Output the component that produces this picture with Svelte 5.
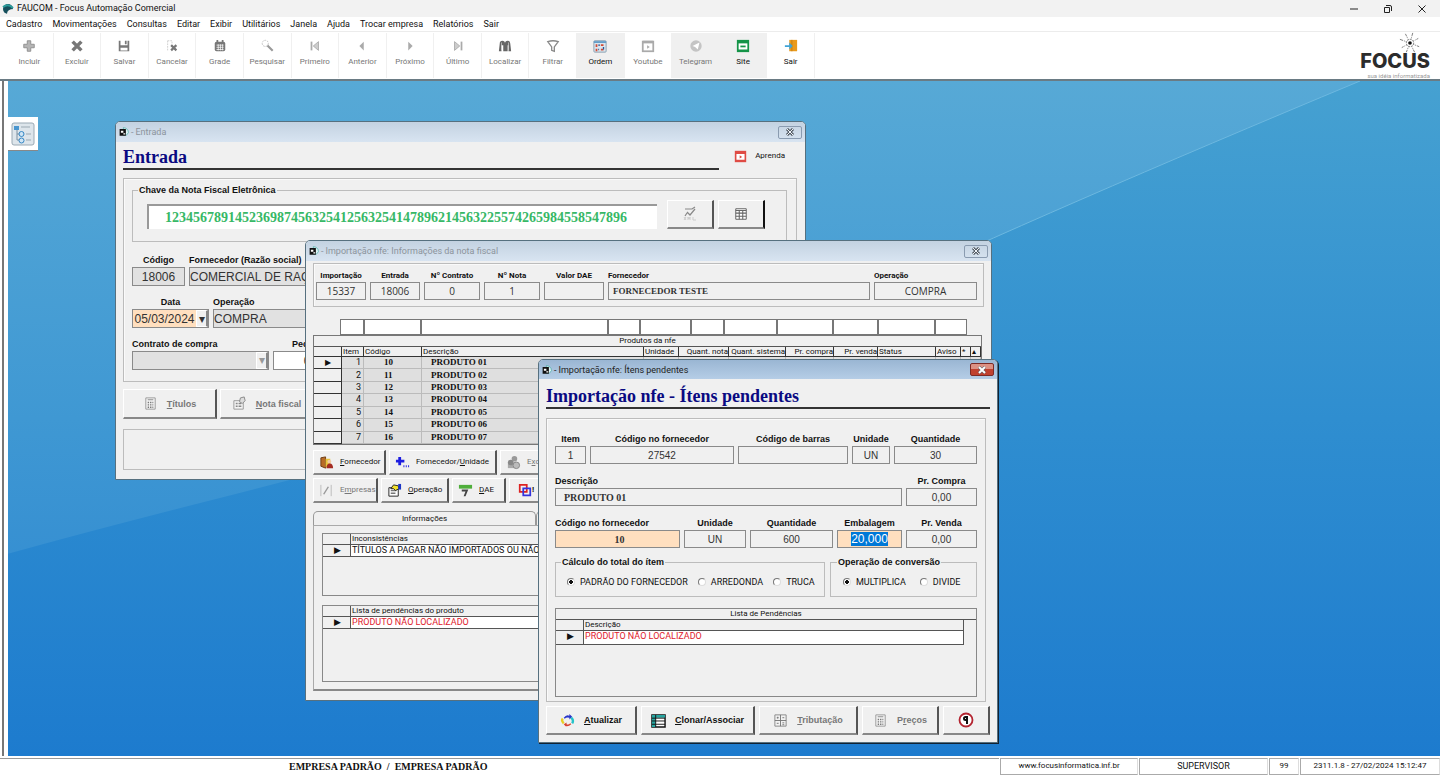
<script>
	const icons = {
		plus: '<path d="M6 2h4v4h4v4h-4v4H6v-4H2V6h4z" fill="#b5b5b5" stroke="#8c8c8c"/>',
		cross: '<path d="M3 3l10 10M13 3L3 13" stroke="#777" stroke-width="4"/>',
		save: '<path d="M2 2h12v12H2z" fill="#777"/><path d="M4 1h8v6H4zM4 10h8v3H4z" fill="#fff"/><path d="M9 2h2v4H9z" fill="#777"/>',
		cancel: '<path d="M3 2h5v3M3 2v12" fill="none" stroke="#ccc" stroke-dasharray="2 1"/><path d="M7 7l6 6M13 7l-6 6" stroke="#777" stroke-width="2.5"/>',
		grid: '<rect x="2" y="3" width="12" height="11" rx="2" fill="#777"/><path d="M4 7h8M4 9.500h8M4 12h8M6 6v7M8.500 6v7M11 6v7" stroke="#fff" stroke-width=".8"/><path d="M5 1v3M11 1v3" stroke="#777" stroke-width="2"/>',
		search: '<circle cx="6" cy="5" r="3.500" fill="none" stroke="#bbb" stroke-dasharray="2 1"/><path d="M8.500 7.500l6 6" stroke="#999" stroke-width="2.500"/>',
		first: '<path d="M4 3v10" stroke="#aaa" stroke-width="2"/><path d="M12 3v10L6 8z" fill="#ccc" stroke="#aaa"/>',
		prev: '<path d="M10 3v10L5 8z" fill="#aaa"/>',
		next: '<path d="M6 3v10l5-5z" fill="#aaa"/>',
		last: '<path d="M12 3v10" stroke="#aaa" stroke-width="2"/><path d="M4 3v10l6-5z" fill="#ccc" stroke="#aaa"/>',
		find: '<path d="M1 14l1-9q0-3 3-3t3 3v9H6V7H4v7zM8 14V5q0-3 3-3t3 3l1 9h-3V7h-1v7z" fill="#666"/><path d="M4 4v9M12 4v9" stroke="#ddd" stroke-width=".7"/>',
		filter: '<path d="M2 3q6-2 12 0L9.500 9v5L6.500 13V9z" fill="#fff" stroke="#888" stroke-width="1.500"/>',
		order: '<rect x="1" y="2" width="14" height="13" rx="1" fill="#dce6ee" stroke="#8199ad"/><path d="M1 3.500h14" stroke="#5d9ac7" stroke-width="2"/><path d="M4 6v3M9 7h3M4 11v3M9 12h3" stroke="#d14b35" stroke-width="2"/><path d="M6 7h2M12 9v3M6 12h1" stroke="#27589b" stroke-width="1.500"/>',
		video: '<rect x="2" y="3" width="12" height="11" fill="#fff" stroke="#aaa" stroke-width="2"/><path d="M2 3.500h12" stroke="#aaa" stroke-width="3"/><path d="M7 7v4l3-2z" fill="#aaa"/>',
		telegram: '<circle cx="8" cy="8" r="6.500" fill="#c4c4c4"/><path d="M4 8l8-4-2 8-3-3z" fill="#fff"/>',
		site: '<rect x="1" y="1" width="14" height="14" fill="#149448"/><path d="M3 5h10v7H3z" fill="#fff"/><path d="M5 8.500h6" stroke="#149448" stroke-width="2"/>',
		exit: '<path d="M6 1h9v13H6z" fill="#e99a1c"/><path d="M9 1v13" stroke="#bf7a12"/><path d="M1 7h5V4l4 4-4 4v-3H1z" fill="#3fa4d8"/>',
		tree: '<rect x="1" y="1" width="22" height="22" rx="2" fill="#dde5eb" stroke="#9aa9b4"/><path d="M6 7v11h3M6 12h3" fill="none" stroke="#7d91a1"/><rect x="3" y="4" width="5" height="4" fill="#4a96cf"/><circle cx="10.500" cy="12" r="2.500" fill="#cfe5f5" stroke="#3486c4"/><circle cx="10.500" cy="18.500" r="2.500" fill="#cfe5f5" stroke="#3486c4"/><path d="M10 5h9M15 12h5M15 18h5" stroke="#9ba9b3"/>',
		form: '<path d="M7 1q8 1 8 8l-3 4H7z" fill="#dff3f5" stroke="#37a59a"/><path d="M1 3h10v11H1z" fill="#111"/><path d="M3 6h4v3H3zM7 10h3v2H7z" fill="#fff"/>',
		learn: '<rect x="1" y="1" width="14" height="14" fill="#df4b44"/><path d="M3 5h10v7H3z" fill="#fff"/><path d="M7 6.500v4l3-2z" fill="#df4b44"/>',
		xml: '<path d="M3 3h7l3-2M5 6l3 3 5-6M3 10l2-3" fill="none" stroke="#888" stroke-width="1.200"/><path d="M2 11l2 3M4 11l-2 3M6 14v-3l1 2 1-2v3M11 11v3h3" stroke="#ccc" fill="none"/>',
		table: '<path d="M2 2h12v12H2z" fill="#fff" stroke="#555"/><path d="M2 4h12M2 7h12M2 10.500h12M6 4v10M10 4v10" stroke="#666" stroke-width="1.200"/>',
		calc: '<path d="M3 2h10v12H3z" fill="#f5f5f5" stroke="#999"/><path d="M5 4h6" stroke="#888"/><path d="M5 7h6M5 9.500h6M5 12h6" stroke="#777" stroke-width="1.500" stroke-dasharray="1.500 1"/>',
		note: '<path d="M2 5h10v9H2z" fill="#f5f5f5" stroke="#999"/><path d="M4 8h2M7 8h3M4 11h2M7 11h3" stroke="#888" stroke-width="1.500"/><path d="M8 6l1-4 4-1 1 4-3 3z" fill="#ddd" stroke="#888"/>',
		supplier: '<path d="M2 3l5-1v12l-5-2z" fill="#b86b25" stroke="#6d3b12"/><path d="M7 4h5v9H7z" fill="#e8c33c"/><circle cx="11" cy="7" r="2" fill="#f2caa2"/><path d="M8 14q0-5 3.500-5T15 14z" fill="#a42b22"/>',
		addUnit: '<path d="M5 2v9M1 6.500h9" stroke="#1c1ce0" stroke-width="3"/><path d="M9 12h1M11.500 12h1M14 12h1" stroke="#1c1ce0" stroke-width="2"/>',
		people: '<circle cx="9" cy="4" r="3" fill="#999"/><path d="M2 8h9v6H2z" fill="#aaa"/><circle cx="5" cy="8" r="3" fill="#888"/><circle cx="11" cy="11" r="3.500" fill="#bbb" stroke="#888"/>',
		pencil: '<path d="M2 2v12M13 2v12" stroke="#bbb"/><path d="M5 12l5-8" stroke="#999" stroke-width="1.500"/>',
		operation: '<path d="M2 5h10v9H2z" fill="#fff" stroke="#222"/><path d="M4 8h6M4 11h5" stroke="#777" stroke-width="1.500"/><path d="M4 6l3-4 5 1 1 3-4 2-2-2z" fill="#f3e22b" stroke="#222"/><path d="M12 1h3v6h-3z" fill="#1b35c4"/>',
		dae: '<path d="M1 2h14v4H1z" fill="#4fae3b"/><path d="M4 7h7L8 14H6l2-5H4z" fill="#444"/>',
		overlap: '<path d="M2 2h8v8H2z" fill="none" stroke="#d22" stroke-width="2"/><path d="M6 6h8v8H6z" fill="none" stroke="#33d" stroke-width="2"/>',
		refresh: '<path d="M4 5q3-4 6-2V1l3 3-3 3V5Q7 4 5 6z" fill="#2937c9"/><path d="M12 5q3 3 1 6" fill="none" stroke="#24c2c9" stroke-width="2.500"/><path d="M12 12q-3 3-6 2l-2-2 3-2v2q2 1 4-1z" fill="#d8432f"/><path d="M4 11Q1 8 3 6" fill="none" stroke="#e8cf22" stroke-width="2.500"/>',
		clone: '<path d="M1 2h14v13H1z" fill="#fff" stroke="#111" stroke-width="1.500"/><path d="M1 2h14v3H1zM1 5h4v10H1z" fill="#26a5a0"/><path d="M1 5.500h14M1 8.500h14M1 12h14M5 2v13" stroke="#111"/>',
		tax: '<path d="M2 2h12v12H2z" fill="#f2f2f2" stroke="#888"/><path d="M8 2v12M2 8h12M4 5h2M5 4v2M10 5h2M4 11h2M10 10.500h2M10 12.500h2" stroke="#777"/>',
		quit: '<circle cx="8" cy="8" r="6.500" fill="#fff" stroke="#b32430" stroke-width="1.800"/><path d="M9 12V5H7.500a1.500 1.500 0 0 0 0 3H9" fill="none" stroke="#111" stroke-width="2"/>'
	};

	const menus = ['Cadastro', 'Movimentações', 'Consultas', 'Editar', 'Exibir', 'Utilitários', 'Janela', 'Ajuda', 'Trocar empresa', 'Relatórios', 'Sair'];

	const tools = [
		{ label: 'Incluir', icon: 'plus' },
		{ label: 'Excluir', icon: 'cross' },
		{ label: 'Salvar', icon: 'save' },
		{ label: 'Cancelar', icon: 'cancel' },
		{ label: 'Grade', icon: 'grid' },
		{ label: 'Pesquisar', icon: 'search' },
		{ label: 'Primeiro', icon: 'first' },
		{ label: 'Anterior', icon: 'prev' },
		{ label: 'Próximo', icon: 'next' },
		{ label: 'Último', icon: 'last' },
		{ label: 'Localizar', icon: 'find' },
		{ label: 'Filtrar', icon: 'filter' },
		{ label: 'Ordem', icon: 'order', on: true, shade: true },
		{ label: 'Youtube', icon: 'video' },
		{ label: 'Telegram', icon: 'telegram', shade: true },
		{ label: 'Site', icon: 'site', on: true, shade: true },
		{ label: 'Sair', icon: 'exit', on: true }
	];

	const products = ['01', '02', '03', '04', '05', '06', '07'].map((n, i) => ({
		item: i + 1,
		code: i + 10,
		name: 'PRODUTO ' + n
	}));

	const columns = ['Unidade', 'Quant. nota', 'Quant. sistema', 'Pr. compra', 'Pr. venda', 'Status', 'Aviso', '*', '▴'];

	let calc = $state('PADRÃO DO FORNECEDOR');
	let conversion = $state('MULTIPLICA');

	function selectAll(node) {
		node.focus();
		node.select();
	}
</script>

{#snippet icon(name, size = 16)}
	<svg class="icon" width={size} height={size} viewBox={name === 'tree' ? '0 0 24 24' : '0 0 16 16'} aria-hidden="true">
		{@html icons[name]}
	</svg>
{/snippet}

{#snippet field(id, label, value, kind = '')}
	<div class="field {kind}">
		<label for={id}>{label}</label>
		<input {id} {value} readonly />
	</div>
{/snippet}

{#snippet titlebar(text)}
	<header class="win-title">
		{@render icon('form', 10)}
		<span class="dash">-</span>
		<span>{text}</span>
		<button class="close" aria-label="Fechar">
			<svg width="10" height="8" viewBox="0 0 10 8"><path d="M2 1l6 6M8 1L2 7" /><path d="M2 1l6 6M8 1L2 7" /></svg>
		</button>
	</header>
{/snippet}

{#snippet pushButton(name, before, key, after, disabled = false)}
	<button class="push" {disabled}>
		{@render icon(name, 15)}
		<span>{before}<u>{key}</u>{after}</span>
	</button>
{/snippet}

<div class="app">
	<header class="app-title">
		<svg width="12" height="12" viewBox="0 0 12 12" aria-hidden="true">
			<circle cx="6" cy="6" r="5" fill="#164f5c" />
			<path d="M5 11q0-5 7-5v5z" fill="#f2f2f2" />
			<path d="M1 4q5-4 10 1" stroke="#2b9c9b" fill="none" stroke-width="2" />
		</svg>
		<span>FAUCOM - Focus Automação Comercial</span>
		<div class="caption-buttons">
			<button aria-label="Minimizar"><svg width="10" height="10"><path d="M1 5h8" /></svg></button>
			<button aria-label="Restaurar"><svg width="10" height="10"><path d="M1.500 3.500h5v5h-5zM3 1.500h4q1.500 0 1.500 1.500v4" /></svg></button>
			<button aria-label="Fechar"><svg width="10" height="10"><path d="M1.500 1.500l7 7M8.500 1.500l-7 7" /></svg></button>
		</div>
	</header>

	<nav class="menu">
		{#each menus as menu}
			<button>{menu}</button>
		{/each}
	</nav>

	<div class="toolbar">
		<div class="tools">
			{#each tools as tool}
				<button class:on={tool.on} class:shade={tool.shade}>
					{@render icon(tool.icon, 14)}
					<span>{tool.label}</span>
				</button>
			{/each}
		</div>
		<div class="logo">
			<svg class="star" width="22" height="22" viewBox="0 0 24 24" aria-hidden="true">
				<path d="M12 12L15 1M12 12l9-5M12 12l10 4M12 12l5 10M12 12l-4 10M12 12l-9 5M12 12L1 8M12 12L7 2" stroke="#777" stroke-dasharray="5 1 1 1" />
				<circle cx="12" cy="12" r="4" fill="#fff" stroke="#777" stroke-dasharray="2 1" />
				<circle cx="12" cy="12" r="2" fill="#111" />
			</svg>
			<strong>FOCUS</strong>
			<small>sua idéia informatizada</small>
		</div>
	</div>

	<div class="workspace">
		<div class="rail"></div>
		<main class="canvas">
			<svg class="wallpaper" viewBox="0 0 1432 675" preserveAspectRatio="none" aria-hidden="true">
				<defs>
					<linearGradient id="light" x1="0" y1="0" x2="0" y2="1">
						<stop offset="0" stop-color="#57a9d6" />
						<stop offset=".5" stop-color="#3f98d3" />
						<stop offset="1" stop-color="#2a84d0" />
					</linearGradient>
					<linearGradient id="deep" x1="0" y1="0" x2="0" y2="1">
						<stop offset="0" stop-color="#46a1d1" />
						<stop offset=".5" stop-color="#2f8ed0" />
						<stop offset="1" stop-color="#1d7bce" />
					</linearGradient>
				</defs>
				<rect width="1432" height="675" fill="url(#light)" />
				<path d="M1352 0Q1040 130 860 214T200 420T0 500V675H1432V0z" fill="url(#deep)" />
				<path d="M1352 0Q1040 130 860 214" fill="none" stroke="#6cb8e0" />
			</svg>

			<button class="tree" aria-label="Árvore de menus">{@render icon('tree', 24)}</button>

			<section class="window entrada">
				{@render titlebar('Entrada')}
				<div class="body">
					<div class="head">
						<h2>Entrada</h2>
						<button class="learn">{@render icon('learn', 13)}<span>Aprenda</span></button>
					</div>
					<div class="frame">
						<fieldset class="key">
							<legend>Chave da Nota Fiscal Eletrônica</legend>
							<input aria-label="Chave da Nota Fiscal Eletrônica" value="123456789145236987456325412563254147896214563225574265984558547896" />
							<button class="push" disabled aria-label="XML">{@render icon('xml', 16)}</button>
							<button class="push dark" aria-label="Tabela">{@render icon('table', 14)}</button>
						</fieldset>
						<div class="row supplier">
							{@render field('e-codigo', 'Código', '18006', 'center gray')}
							{@render field('e-fornecedor', 'Fornecedor (Razão social)', 'COMERCIAL DE RAÇÕES', 'gray')}
						</div>
						<div class="row date">
							<div class="field center">
								<label for="e-data">Data</label>
								<div class="combo">
									<input id="e-data" value="05/03/2024" />
									<button aria-label="Abrir calendário">▾</button>
								</div>
							</div>
							{@render field('e-operacao', 'Operação', 'COMPRA', 'gray')}
						</div>
						<div class="row contract">
							<div class="field">
								<label for="e-contrato">Contrato de compra</label>
								<div class="combo off">
									<select id="e-contrato" disabled><option></option></select>
									<span class="arrow">▾</span>
								</div>
							</div>
							{@render field('e-pedido', 'Pedido', '0', 'center')}
						</div>
					</div>
					<div class="buttons">
						{@render pushButton('calc', '', 'T', 'ítulos', true)}
						{@render pushButton('note', '', 'N', 'ota fiscal', true)}
					</div>
					<div class="message"></div>
				</div>
			</section>

			<section class="window nota">
				{@render titlebar('Importação nfe: Informações da nota fiscal')}
				<div class="body">
					<div class="frame row">
						{@render field('n-importacao', 'Importação', '15337', 'center')}
						{@render field('n-entrada', 'Entrada', '18006', 'center')}
						{@render field('n-contrato', 'Nº Contrato', '0', 'center')}
						{@render field('n-nota', 'Nº Nota', '1', 'center')}
						{@render field('n-dae', 'Valor DAE', '', 'center')}
						{@render field('n-fornecedor', 'Fornecedor', 'FORNECEDOR TESTE', 'serif')}
						{@render field('n-operacao', 'Operação', 'COMPRA', 'mid')}
					</div>
					<div class="filters">
						{#each Array(11) as _, i}
							<input aria-label="Filtro da coluna {i + 1}" />
						{/each}
					</div>
					<div class="products">
						<div class="products-title">Produtos da nfe</div>
						<table>
							<colgroup>
								<col class="c28" /><col class="c22" /><col class="c58" /><col /><col class="c35" /><col class="c50" />
								<col class="c57" /><col class="c48" /><col class="c44" /><col class="c58" /><col class="c25" /><col class="c10" /><col class="c10" />
							</colgroup>
							<thead>
								<tr>
									<th></th>
									<th>Item</th>
									<th>Código</th>
									<th>Descrição</th>
									{#each columns as column}
										<th class:right={column.includes('.')}>{column}</th>
									{/each}
								</tr>
							</thead>
							<tbody>
								{#each products as product}
									<tr>
										<th>{product.item === 1 ? '▶' : ''}</th>
										<td class="item">{product.item}</td>
										<td class="code">{product.code}</td>
										<td class="name">{product.name}</td>
										{#each columns as _}
											<td></td>
										{/each}
									</tr>
								{/each}
							</tbody>
						</table>
					</div>
					<div class="buttons first">
						{@render pushButton('supplier', '', 'F', 'ornecedor')}
						{@render pushButton('addUnit', 'Fornecedor/', 'U', 'nidade')}
						{@render pushButton('people', 'E', 'x', 'cluir', true)}
					</div>
					<div class="buttons second">
						{@render pushButton('pencil', 'E', 'm', 'presas', true)}
						{@render pushButton('operation', '', 'O', 'peração')}
						{@render pushButton('dae', '', 'D', 'AE')}
						<button class="push tight">{@render icon('overlap', 14)}<b>!</b></button>
					</div>
					<div class="tabs">
						<button class="active">Informações</button>
						<button aria-label="Outra guia"></button>
					</div>
					<div class="tab-panel">
						<div class="list">
							<table>
								<thead><tr><th></th><th>Inconsistências</th></tr></thead>
								<tbody><tr><th>▶</th><td>TÍTULOS A PAGAR NÃO IMPORTADOS OU NÃO CADASTRADOS</td></tr></tbody>
							</table>
						</div>
						<div class="list tall">
							<table>
								<thead><tr><th></th><th>Lista de pendências do produto</th></tr></thead>
								<tbody><tr><th>▶</th><td class="red">PRODUTO NÃO LOCALIZADO</td></tr></tbody>
							</table>
						</div>
					</div>
				</div>
			</section>

			<section class="window itens">
				{@render titlebar('Importação nfe: Ítens pendentes')}
				<div class="body">
					<h2>Importação nfe - Ítens pendentes</h2>
					<div class="frame">
						<div class="row r1">
							{@render field('i-item', 'Item', '1', 'center')}
							{@render field('i-codigo', 'Código no fornecedor', '27542', 'center')}
							{@render field('i-barras', 'Código de barras', '', 'center')}
							{@render field('i-unidade', 'Unidade', 'UN', 'center')}
							{@render field('i-quantidade', 'Quantidade', '30', 'center')}
						</div>
						<div class="row r2">
							{@render field('i-descricao', 'Descrição', 'PRODUTO 01', 'serif')}
							{@render field('i-compra', 'Pr. Compra', '0,00', 'center')}
						</div>
						<div class="row r3">
							{@render field('s-codigo', 'Código no fornecedor', '10', 'serif mid peach')}
							{@render field('s-unidade', 'Unidade', 'UN', 'center')}
							{@render field('s-quantidade', 'Quantidade', '600', 'center')}
							<div class="field center peach big">
								<label for="s-embalagem">Embalagem</label>
								<input id="s-embalagem" value="20,000" use:selectAll />
							</div>
							{@render field('s-venda', 'Pr. Venda', '0,00', 'center')}
						</div>
						<div class="options">
							<fieldset>
								<legend>Cálculo do total do ítem</legend>
								{#each ['PADRÃO DO FORNECEDOR', 'ARREDONDA', 'TRUCA'] as option}
									<label><input type="radio" name="calc" value={option} bind:group={calc} />{option}</label>
								{/each}
							</fieldset>
							<fieldset class="conversion">
								<legend>Operação de conversão</legend>
								{#each ['MULTIPLICA', 'DIVIDE'] as option}
									<label><input type="radio" name="conversion" value={option} bind:group={conversion} />{option}</label>
								{/each}
							</fieldset>
						</div>
						<div class="list pending">
							<div class="list-title">Lista de Pendências</div>
							<table>
								<thead><tr><th></th><th>Descrição</th></tr></thead>
								<tbody><tr><th>▶</th><td class="red">PRODUTO NÃO LOCALIZADO</td></tr></tbody>
							</table>
						</div>
					</div>
					<div class="buttons">
						{@render pushButton('refresh', '', 'A', 'tualizar')}
						{@render pushButton('clone', '', 'C', 'lonar/Associar')}
						{@render pushButton('tax', '', 'T', 'ributação', true)}
						{@render pushButton('calc', 'P', 'r', 'eços', true)}
						<button class="push" aria-label="Sair">{@render icon('quit', 16)}</button>
					</div>
				</div>
			</section>
		</main>
	</div>

	<footer class="status">
		<div class="company">EMPRESA PADRÃO&nbsp; /&nbsp; EMPRESA PADRÃO</div>
		<div class="cell"><a href="#site">www.focusinformatica.inf.br</a></div>
		<div class="cell caps">SUPERVISOR</div>
		<div class="cell">99</div>
		<div class="cell">2311.1.8 - 27/02/2024 15:12:47</div>
	</footer>
</div>

<style>
	:global(body) {
		margin: 0;
	}
	.app {
		display: flex;
		flex-direction: column;
		min-height: 100vh;
		overflow: hidden;
		font: 8px/12px Roboto, 'Liberation Sans', sans-serif;
		color: #111;
		background: #fff;
	}
	.app :global(*) {
		box-sizing: border-box;
	}
	button,
	input,
	select {
		font: inherit;
		color: inherit;
		margin: 0;
		padding: 0;
		border: 0;
		border-radius: 0;
		background: none;
		min-width: 0;
	}
	.icon {
		flex: none;
	}

	/* main window */
	.app-title {
		display: flex;
		align-items: center;
		gap: 3px;
		height: 17px;
		padding-left: 2px;
		background: #f2f2f2;
		font: 9px/17px Roboto, sans-serif;
	}
	.caption-buttons {
		display: flex;
		gap: 24px;
		margin-left: auto;
		padding-right: 13px;
	}
	.caption-buttons button {
		display: flex;
		align-items: center;
	}
	.caption-buttons path {
		fill: none;
		stroke: #222;
	}
	.menu {
		display: flex;
		gap: 10px;
		height: 15px;
		padding-left: 6px;
		border-bottom: 1px solid #ececec;
		font: 9px/15px Roboto, sans-serif;
	}
	.toolbar {
		display: flex;
		justify-content: space-between;
		height: 47px;
	}
	.tools {
		display: grid;
		grid-template-columns: repeat(17, 1fr);
		width: 809px;
		margin: 1px 0 1px 6px;
	}
	.tools button {
		display: flex;
		flex-direction: column;
		align-items: center;
		gap: 2px;
		padding-top: 6px;
		border-right: 1px solid #f0f0f0;
		color: #777;
	}
	.tools button span {
		line-height: 14px;
	}
	.tools .on {
		color: #111;
	}
	.tools .shade {
		background: #f0f0f0;
	}
	.logo {
		display: grid;
		justify-items: end;
		align-content: start;
		margin-right: 10px;
		color: #2c2c2c;
	}
	.star {
		margin-right: 9px;
	}
	.logo strong {
		font: 800 20px/14px Inter, sans-serif;
	}
	.logo small {
		margin-top: 4px;
		font: 6px/7px Roboto, sans-serif;
		color: #999;
	}

	/* desktop */
	.workspace {
		display: flex;
		flex: 1;
		border-top: 2px solid #6a7b84;
	}
	.rail {
		width: 6px;
		margin-left: 2px;
		border-left: 2px solid #777;
	}
	.canvas {
		position: relative;
		flex: 1;
		min-height: 675px;
		background: #2d8bd1;
	}
	.wallpaper {
		position: absolute;
		width: 100%;
		height: 100%;
	}
	.tree {
		position: absolute;
		left: 0;
		top: 36px;
		display: grid;
		place-items: center;
		width: 30px;
		height: 34px;
		background: #fff;
		border-bottom: 1px solid #888;
	}
	.window {
		position: absolute;
		border: 1px solid #56707f;
		border-radius: 5px 5px 0 0;
		background: #f0f0f0;
		overflow: hidden;
	}
	.entrada {
		left: 107px;
		top: 40px;
		width: 691px;
	}
	.nota {
		left: 297px;
		top: 159px;
		width: 687px;
	}
	.itens {
		left: 530px;
		top: 278px;
		width: 460px;
		box-shadow: 1px 1px 0 #123;
	}
	.win-title {
		display: flex;
		align-items: center;
		gap: 2px;
		height: 20px;
		padding: 0 3px;
		background: linear-gradient(#c3d2e1, #d8e4f1);
		color: #8c949c;
		font: 9px/20px Roboto, sans-serif;
	}
	.itens .win-title {
		height: 19px;
		background: linear-gradient(#9ab6d3, #b5cde6);
		color: #222;
	}
	.close {
		display: grid;
		place-items: center;
		width: 24px;
		height: 13px;
		margin-left: auto;
		border: 1px solid #8a9bb0;
		border-radius: 2px;
	}
	.close path {
		stroke: #555d66;
		stroke-width: 3;
	}
	.close path + path {
		stroke: #eef3f8;
		stroke-width: 1;
	}
	.itens .close {
		border-color: #7c2b26;
		background: linear-gradient(#dc9184 50%, #c0412f 50%);
	}
	.itens .close path + path {
		stroke: #fff;
		stroke-width: 2;
	}
	h2 {
		flex: 1;
		height: 24px;
		margin: 0;
		border-bottom: 2px solid #333;
		color: #0a0a82;
		font: bold 18px/22px 'Liberation Serif', serif;
	}
	.frame {
		border: 1px solid #bcbcbc;
		box-shadow: inset 1px 1px 0 #fafafa;
	}
	.row {
		display: grid;
		gap: 4px;
	}
	.field {
		display: flex;
		flex-direction: column;
		min-width: 0;
	}
	.field label,
	legend {
		font: bold 9px/13px 'Liberation Sans', sans-serif;
		white-space: nowrap;
	}
	.field input,
	.combo {
		width: 100%;
		height: 18px;
		border: 1px solid #8a8a8a;
		font: 10px/16px 'Liberation Sans', sans-serif;
		color: #333;
		outline: none;
	}
	.center label,
	.center input,
	.mid input {
		text-align: center;
	}
	.serif input {
		padding-left: 4px;
		font: bold 9px/16px 'Liberation Serif', serif;
	}
	.peach input {
		background: #ffdfbf;
	}
	.big input {
		font-size: 12px;
	}
	.big input::selection {
		background: #0078d7;
		color: #fff;
	}
	.buttons {
		display: grid;
		gap: 3px;
	}
	.push {
		display: flex;
		align-items: center;
		justify-content: center;
		gap: 6px;
		border: solid #fff;
		border-width: 1px 2px 2px 1px;
		border-right-color: #555;
		border-bottom-color: #888;
		white-space: nowrap;
	}
	.push:disabled {
		color: #777;
	}
	table {
		width: 100%;
		border-collapse: separate;
		border-spacing: 0;
		table-layout: fixed;
	}
	th,
	td {
		padding: 0 0 0 1px;
		font-weight: normal;
		text-align: left;
		white-space: nowrap;
		overflow: hidden;
	}
	.red {
		color: #e0202c;
	}

	/* Entrada */
	.entrada .body {
		padding: 4px 8px 9px 7px;
	}
	.entrada .head {
		display: flex;
		gap: 15px;
	}
	.learn {
		display: flex;
		align-items: center;
		gap: 8px;
		height: 20px;
		margin-right: 12px;
	}
	.entrada .frame {
		margin-top: 8px;
		padding: 5px 8px 11px 8px;
	}
	fieldset {
		display: flex;
		margin: 0;
		min-width: 0;
		border: 1px solid #bcbcbc;
	}
	legend {
		padding: 0 1px;
		line-height: 12px;
	}
	.key {
		gap: 4px;
		margin-right: 1px;
		padding: 4px 21px 12px 14px;
	}
	.key legend {
		margin-left: -9px;
	}
	.key input {
		flex: 1;
		height: 25px;
		margin: 4px 6px 0 0;
		padding-left: 16px;
		border: 1px solid #999;
		border-width: 2px 0 0 2px;
		background: #fff;
		color: #37b866;
		font: bold 14px/22px 'Liberation Serif', serif;
	}
	.key .push {
		width: 47px;
		height: 29px;
	}
	.push.dark {
		border-right-color: #111;
	}
	.entrada .row {
		margin-top: 10px;
	}
	.entrada .supplier {
		grid-template-columns: 53px 1fr;
		margin-top: 12px;
	}
	.entrada .date {
		grid-template-columns: 77px 1fr;
	}
	.entrada .contract {
		grid-template-columns: 137px 68px;
	}
	.entrada .field input,
	.entrada .combo {
		height: 19px;
		font-size: 12px;
		background: #fff;
	}
	.entrada .gray input,
	.entrada .combo.off {
		background: #e1e1e1;
	}
	.combo {
		display: flex;
	}
	.entrada .combo input {
		flex: 1;
		height: 17px;
		border: 0;
		background: #ffdfbf;
	}
	.combo select {
		flex: 1;
		appearance: none;
	}
	.combo button,
	.arrow {
		width: 12px;
		border: solid #fff;
		border-width: 1px 2px 1px 1px;
		border-right-color: #888;
		background: #f0f0f0;
		text-align: center;
		line-height: 14px;
	}
	.arrow {
		color: #999;
	}
	.entrada .buttons {
		grid-template-columns: 94px 94px;
		grid-auto-rows: 30px;
		margin-top: 7px;
	}
	.entrada .buttons .push,
	.itens .push {
		gap: 9px;
		font: bold 9px/12px 'Liberation Sans', sans-serif;
	}
	.message {
		height: 41px;
		margin-top: 10px;
		border: 1px solid #bcbcbc;
	}

	/* Informações da nota */
	.nota .body {
		padding: 2px 7px 9px 7px;
	}
	.nota .frame {
		grid-template-columns: 50px 50px 56px 56px 60px 1fr 103px;
		padding: 5px 6px 6px 2px;
	}
	.nota .field label {
		font: bold 8px/13px Roboto, sans-serif;
	}
	.nota .field input {
		font-family: 'Open Sans', sans-serif;
	}
	.nota .serif input {
		font-family: 'Liberation Serif', serif;
	}
	.filters {
		display: grid;
		grid-template-columns: 24px 57px 187px 32px 51px 33px 53px 56px 45px 57px 32px;
		margin: 12px 0 0 27px;
	}
	.filters input {
		height: 16px;
		border: 1px solid #777;
		background: #fff;
	}
	.products {
		width: 669px;
		border: 1px solid #777;
	}
	.products-title {
		height: 11px;
		line-height: 10px;
		border-bottom: 1px solid #555;
		text-align: center;
	}
	.products table {
		height: 97px;
	}
	.products thead th {
		height: 10px;
		line-height: 9px;
		border: solid #333;
		border-width: 0 1px 1px 0;
	}
	.products thead .right {
		text-align: right;
	}
	.products tbody th {
		line-height: 11px;
		border: solid #333;
		border-width: 0 1px 1px 0;
		text-align: center;
	}
	.products td {
		background: #dfdfdf;
		border: solid #bbb;
		border-width: 0 1px 1px 0;
		line-height: 11px;
	}
	.products .item {
		text-align: right;
		font-size: 9px;
		padding-right: 2px;
	}
	.products .code,
	.products .name {
		font: bold 9px/11px 'Liberation Serif', serif;
		padding-left: 9px;
	}
	.products .code {
		padding-left: 20px;
	}
	.c10 {
		width: 10px;
	}
	.c22 {
		width: 22px;
	}
	.c25 {
		width: 25px;
	}
	.c28 {
		width: 28px;
	}
	.c35 {
		width: 35px;
	}
	.c44 {
		width: 44px;
	}
	.c48 {
		width: 48px;
	}
	.c50 {
		width: 50px;
	}
	.c57 {
		width: 57px;
	}
	.c58 {
		width: 58px;
	}
	.nota .buttons {
		grid-auto-rows: 25px;
	}
	.nota .push {
		justify-content: flex-start;
		padding-left: 5px;
	}
	.nota .push.tight {
		gap: 0;
		padding-left: 8px;
	}
	.nota .first {
		grid-template-columns: 73px 108px 80px;
		margin-top: 5px;
	}
	.nota .second {
		grid-template-columns: 65px 68px 54px 54px;
		margin-top: 3px;
	}
	.tabs {
		display: grid;
		grid-template-columns: 223px 223px;
		height: 14px;
		margin-top: 8px;
	}
	.tabs button {
		border: 1px solid #999;
		border-bottom: 0;
		border-radius: 5px 5px 0 0;
	}
	.tab-panel {
		padding: 7px 8px;
		border: 1px solid #aaa;
		border-bottom: 2px solid #888;
	}
	.list {
		height: 63px;
		border: 1px solid #888;
		font-size: 9px;
	}
	.list.tall {
		height: 77px;
		margin-top: 9px;
	}
	.list th:first-child {
		width: 28px;
		text-align: center;
	}
	.list th,
	.list td {
		height: 12px;
		line-height: 10px;
		border: solid #555;
		border-width: 0 1px 1px 0;
		vertical-align: top;
	}
	.list thead th {
		height: 11px;
		font-size: 8px;
	}
	.list td {
		background: #fff;
	}

	/* Ítens pendentes */
	.itens .body {
		padding: 6px 7px 7px 7px;
	}
	.itens .frame {
		margin: 9px 4px 0 0;
		padding: 14px 8px 4px 8px;
	}
	.itens .row + .row {
		margin-top: 11px;
	}
	.r1 {
		grid-template-columns: 31px 144px 1fr 38px 83px;
	}
	.r2 {
		grid-template-columns: 1fr 71px;
	}
	.itens .serif input {
		font-size: 10px;
	}
	.itens .r2 .serif input {
		padding-left: 8px;
	}
	.r3 {
		grid-template-columns: 1fr 62px 83px 65px 71px;
	}
	.options {
		display: grid;
		grid-template-columns: 270px 1fr;
		gap: 5px;
		margin-top: 8px;
	}
	.options fieldset {
		gap: 10px;
		padding: 8px 0 8px 11px;
	}
	.options .conversion {
		gap: 14px;
		padding-left: 12px;
	}
	.options legend {
		margin-left: -6px;
	}
	.options label {
		display: flex;
		align-items: center;
		gap: 5px;
		font-size: 9px;
		white-space: nowrap;
	}
	.options input {
		appearance: none;
		width: 8px;
		height: 8px;
		border: 1px solid #777;
		border-right-color: #ddd;
		border-bottom-color: #ddd;
		border-radius: 50%;
		background: #fff;
	}
	.options input:checked {
		background: radial-gradient(circle, #111 40%, #fff 50%);
	}
	.list.pending {
		height: 89px;
		margin-top: 11px;
	}
	.list-title {
		border-bottom: 1px solid #555;
		font-size: 8px;
		line-height: 10px;
		text-align: center;
	}
	.pending table {
		width: 408px;
	}
	.pending td,
	.pending tbody th {
		height: 14px;
	}
	.itens .buttons {
		grid-template-columns: 91px 114px 99px 77px 1fr;
		grid-auto-rows: 29px;
		gap: 4px;
		margin-top: 4px;
	}

	/* status bar */
	.status {
		display: grid;
		grid-template-columns: 1fr 138px 129px 30px 140px;
		gap: 1px;
		height: 19px;
		padding-top: 2px;
	}
	.company {
		padding-left: 289px;
		border-top: 1px solid #999;
		font: bold 10px/16px 'Liberation Serif', serif;
	}
	.cell {
		border: 1px solid #aaa;
		border-right-color: #ddd;
		text-align: center;
		line-height: 14px;
	}
	.caps {
		font-size: 9px;
	}
	.cell a {
		color: inherit;
		text-decoration: none;
	}
</style>
